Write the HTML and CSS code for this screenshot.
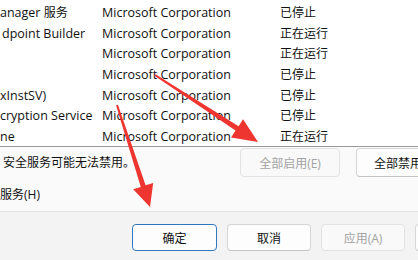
FILE: index.html
```html
<!DOCTYPE html>
<html lang="zh-CN">
<head>
<meta charset="utf-8">
<link rel="stylesheet" href="styles.css">
</head>
<body>
<div class="dialog">
  <div class="upper">
    <div class="list">
      <div class="row"><span class="name">anager <span class="cjk">服务</span></span><span class="co">Microsoft Corporation</span><span class="st">已停止</span></div>
      <div class="row"><span class="name n2">dpoint Builder</span><span class="co">Microsoft Corporation</span><span class="st">正在运行</span></div>
      <div class="row"><span class="name"></span><span class="co">Microsoft Corporation</span><span class="st">正在运行</span></div>
      <div class="row"><span class="name"></span><span class="co">Microsoft Corporation</span><span class="st">已停止</span></div>
      <div class="row"><span class="name">xInstSV)</span><span class="co">Microsoft Corporation</span><span class="st">已停止</span></div>
      <div class="row"><span class="name">cryption Service</span><span class="co">Microsoft Corporation</span><span class="st">已停止</span></div>
      <div class="row"><span class="name">ne</span><span class="co">Microsoft Corporation</span><span class="st">正在运行</span></div>
    </div>
    <div class="options">
      <span class="note">安全服务可能无法禁用。</span>
      <button class="btn disabled">全部启用(E)</button>
      <button class="btn">全部禁用(D)</button>
    </div>
    <div class="hide">服务(H)</div>
  </div>
  <div class="footer">
    <button class="btn fbtn default">确定</button>
    <button class="btn fbtn">取消</button>
    <button class="btn fbtn disabled">应用(A)</button>
    <button class="btn fbtn"></button>
  </div>
</div>
<svg class="arrows" width="418" height="260" viewBox="0 0 418 260">
  <polygon fill="#ee3530" points="155.55,74.15 238.6,126.2 243.05,119.2 258,142 231.05,137.6 235.5,130.6 154.45,75.85"/>
  <polygon fill="#ee3530" points="117.95,104.7 145.6,185.3 153.2,182.9 150,207 133.2,189.3 140.8,186.9 116.05,105.3"/>
</svg>
</body>
</html>
```
FILE: styles.css
```css
* { box-sizing: border-box; }
html, body {
  margin: 0;
  padding: 0;
  width: 418px;
  height: 260px;
  overflow: hidden;
}
body {
  font-family: "Open Sans", "Noto Sans CJK SC", sans-serif;
  font-size: 12px;
  color: #111;
  background: #fafafa;
  position: relative;
}
.dialog {
  display: flex;
  flex-direction: column;
  height: 260px;
}
.upper {
  flex: 1;
  display: flex;
  flex-direction: column;
  background: #fafafa;
}
.list {
  height: 147px;
  padding-top: 3px;
  background: #fff;
  border-bottom: 1px solid #9a9a9a;
  overflow: hidden;
  flex: none;
}
.row {
  display: grid;
  grid-template-columns: 102px 178px 1fr;
  height: 20.6px;
  align-items: center;
  white-space: nowrap;
  line-height: 16px;
}
.name, .co {
  overflow: hidden;
  font-size: 12.5px;
}
.cjk { font-size: 12px; }
.n2 { padding-left: 2px; }
.st { overflow: hidden; }
.options {
  display: grid;
  grid-template-columns: 221px 100px 100px;
  column-gap: 16px;
  align-items: center;
  margin-top: 1px;
  padding-left: 3px;
  height: 29px;
  white-space: nowrap;
}
.note { line-height: 16px; }
.btn {
  font: inherit;
  font-size: 12px;
  color: #111;
  height: 29px;
  background: #fdfdfd;
  border: 1px solid #d6d6d6;
  border-bottom-color: #c4c4c4;
  border-radius: 4px;
  padding: 0;
  white-space: nowrap;
  text-align: center;
}
.btn.disabled {
  color: #a3a3a3;
  background: #f9f9f9;
  border-color: #e3e3e3;
}
.hide {
  margin-top: 10px;
  line-height: 16px;
  white-space: nowrap;
}
.footer {
  flex: none;
  height: 49px;
  border-top: 1px solid #e3e3e3;
  background: #f3f3f3;
  display: flex;
  gap: 10px;
  padding-left: 132px;
  padding-top: 12px;
  overflow: hidden;
}
.fbtn {
  flex: none;
  width: 84px;
  height: 27px;
}
.fbtn.default {
  width: 85px;
  border: 1px solid #2f78bd;
}
.arrows {
  position: absolute;
  left: 0;
  top: 0;
  pointer-events: none;
}
```
